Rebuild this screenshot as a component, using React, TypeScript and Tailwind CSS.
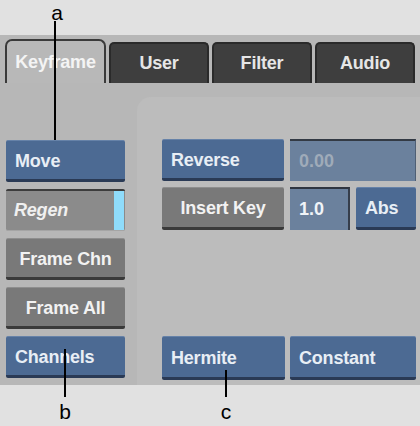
import React from 'react';

const font = { fontFamily: '"Liberation Sans", Arial, sans-serif' };

type Tone = 'blue' | 'gray';

const Btn: React.FC<{ label: string; tone: Tone; center?: boolean; className?: string }> = ({
  label,
  tone,
  center,
  className = '',
}) => {
  const toneCls =
    tone === 'blue'
      ? 'bg-[#4c6a93] border-b-[3px] border-b-[#2a3a55] border-t border-t-[#6682a8] text-[#e8eef5]'
      : 'bg-[#797979] border-b-[3px] border-b-[#3a3a3a] border-t border-t-[#8e8e8e] text-[#f2f2f2]';
  return (
    <div
      className={`flex items-center h-[42px] pt-[2px] rounded-[2px] text-[18px] font-bold tracking-[-0.2px] ${
        center ? 'justify-center' : 'pl-[9px]'
      } ${toneCls} ${className}`}
    >
      {label}
    </div>
  );
};

const Tab: React.FC<{ label: string; active?: boolean }> = ({ label, active }) =>
  active ? (
    <div className="flex items-center justify-center w-[101px] h-[44px] border-2 border-b-0 border-[#3a3a3a] rounded-t-[7px] text-[18px] font-bold tracking-[-0.2px] text-[#f4f4f4] bg-[#b8b8b8]">
      {label}
    </div>
  ) : (
    <div className="flex items-center justify-center w-[100px] h-[41px] mt-[3px] border-2 border-b-0 border-[#2a2a2a] rounded-t-[5px] text-[18px] font-bold tracking-[-0.2px] text-[#e6e6e6] bg-[#3e3e3e]">
      {label}
    </div>
  );

export default function App() {
  return (
    <div className="relative w-[420px] h-[426px] bg-[#e1e1e1] overflow-hidden" style={font}>
      <div className="h-[35px]" />
      <div className="h-[350px] bg-[#b7b7b7] flex flex-col">
        <div className="flex gap-[3px] pl-[5px] pt-[4px] h-[48px]">
          <Tab label="Keyframe" active />
          <Tab label="User" />
          <Tab label="Filter" />
          <Tab label="Audio" />
        </div>
        <div className="flex flex-1">
          <div className="w-[140px] pl-[6px] pr-[12px] pt-[57px] flex flex-col gap-[7px]">
            <Btn label="Move" tone="blue" />
            <div className="flex h-[42px] rounded-[2px] bg-[#8b8b8b] border-t-2 border-t-[#3c3c3c] border-b border-b-[#a5a5a5]">
              <div className="flex-1 flex items-center pl-[8px] text-[18px] font-bold italic tracking-[-0.2px] text-[#f0f0f0]">
                Regen
              </div>
              <div className="w-[10px] mr-[1px] bg-[#8fdcfb]" />
            </div>
            <Btn label="Frame Chn" tone="gray" center />
            <Btn label="Frame All" tone="gray" center />
            <Btn label="Channels" tone="blue" />
          </div>
          <div className="flex-1 mt-[14px] rounded-tl-[14px] bg-[#bcbcbc] pl-[25px] pr-[4px] pt-[42px] pb-[5px] flex flex-col">
            <div className="flex gap-[6px]">
              <Btn label="Reverse" tone="blue" className="w-[122px]" />
              <div className="flex-1 flex items-center h-[42px] pl-[9px] bg-[#6b819d] border-t-2 border-t-[#333a44] border-r border-r-[#4f5f74] text-[18px] font-bold text-[#9fabb9]">
                0.00
              </div>
            </div>
            <div className="flex gap-[6px] mt-[6px]">
              <Btn label="Insert Key" tone="gray" center className="w-[122px] h-[43px]" />
              <div className="w-[60px] flex items-center h-[43px] pl-[9px] bg-[#6b819d] border-t-2 border-t-[#2f3540] border-r-2 border-r-[#353d4a] text-[18px] font-bold text-[#f0f4f8]">
                1.0
              </div>
              <Btn label="Abs" tone="blue" className="w-[60px] h-[43px]" />
            </div>
            <div className="flex gap-[5px] mt-auto">
              <Btn label="Hermite" tone="blue" className="w-[123px] h-[44px]" />
              <Btn label="Constant" tone="blue" className="flex-1 h-[44px]" />
            </div>
          </div>
        </div>
      </div>

      {/* callouts */}
      <div className="absolute left-[47px] top-[-3px] w-[20px] text-center text-[21px] text-black">a</div>
      <div className="absolute left-[54px] top-[21px] w-[2px] h-[119px] bg-black" />
      <div className="absolute left-[64px] top-[349px] w-[2px] h-[48px] bg-black" />
      <div className="absolute left-[55px] top-[396px] w-[20px] text-center text-[21px] text-black">b</div>
      <div className="absolute left-[225px] top-[370px] w-[2px] h-[27px] bg-black" />
      <div className="absolute left-[216px] top-[396px] w-[20px] text-center text-[21px] text-black">c</div>
    </div>
  );
}
